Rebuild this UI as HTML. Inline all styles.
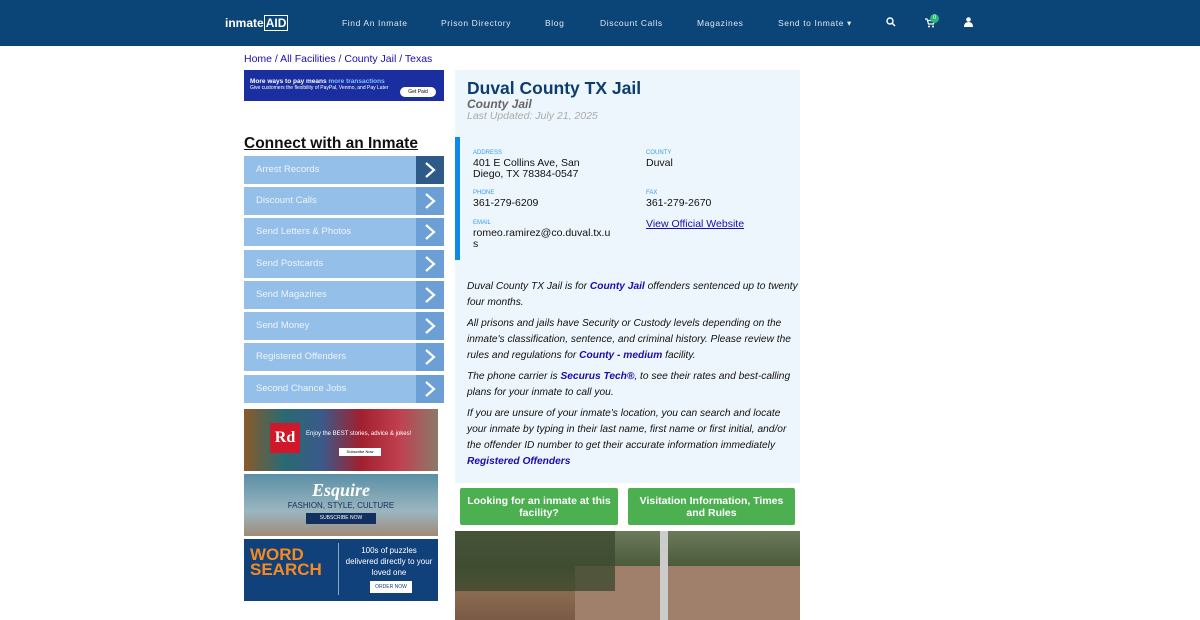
<!DOCTYPE html>
<html><head><meta charset="utf-8"><style>
*{margin:0;padding:0;box-sizing:border-box}
body{width:1200px;height:620px;overflow:hidden;background:#fff;font-family:"Liberation Sans",sans-serif;position:relative}
.nav{position:absolute;left:0;top:0;width:1200px;height:46px;background:#0b4477}
.nav span{position:absolute;top:18px;color:#dfe6ee;font-size:8.5px;letter-spacing:.6px;white-space:nowrap}
.logo{position:absolute;left:225px;top:16px;color:#fff;font-weight:bold;font-size:12px;white-space:nowrap}
.abs{position:absolute}
.crumb{left:244px;top:53px;font-size:10.5px;color:#1a0dab}
.btn{position:absolute;left:244px;width:200px;height:28px;background:#94bfe9;color:#eef5fc;font-size:9.5px;line-height:28px;padding-left:12px}
.btn b{position:absolute;right:0;top:0;width:28px;height:28px;background:#6b9fd6}
.btn b svg{position:absolute;left:7px;top:5px}
.panel{position:absolute;left:455px;top:70px;width:345px;height:413px;background:#edf6fd}
.lab{position:absolute;font-size:6px;color:#3a9cf0}
.val{position:absolute;font-size:10.5px;color:#111;line-height:11px}
.p{position:absolute;left:467px;width:332px;font-size:10.2px;font-style:italic;color:#111;line-height:16px}
.p a{color:#1a0dab;font-weight:bold;text-decoration:none}
.g{position:absolute;top:488px;height:37px;background:#4caf50;color:#fff;font-weight:bold;font-size:10.5px;text-align:center;border-radius:2px;padding:7px 8px 0;line-height:12px}
</style></head><body>
<div class="nav">
<div class="logo">inmate<span style="position:static;font-size:12px;color:#fff;letter-spacing:0;border:1px solid #fff;padding:0 1px;font-weight:bold">AID</span></div>
<span style="left:342px">Find An Inmate</span>
<span style="left:441px">Prison Directory</span>
<span style="left:545px">Blog</span>
<span style="left:600px">Discount Calls</span>
<span style="left:697px">Magazines</span>
<span style="left:778px">Send to Inmate ▾</span>
<svg class="abs" style="left:886px;top:17px" width="10" height="10"><circle cx="4" cy="4" r="3" stroke="#fff" stroke-width="1.4" fill="none"/><path d="M6.3 6.3L9 9" stroke="#fff" stroke-width="1.5"/></svg>
<svg class="abs" style="left:925px;top:18px" width="10" height="10"><path d="M0 1h2l1.5 5h5l1-3.5H3" stroke="#fff" stroke-width="1.2" fill="none"/><circle cx="4" cy="8.5" r="1" fill="#fff"/><circle cx="8" cy="8.5" r="1" fill="#fff"/></svg>
<div class="abs" style="left:930px;top:14px;width:9px;height:9px;border-radius:50%;background:#29b67d;color:#fff;font-size:6px;text-align:center;line-height:9px">0</div>
<svg class="abs" style="left:964px;top:17px" width="9" height="10"><circle cx="4.5" cy="2.5" r="2.3" fill="#fff"/><path d="M0 10 Q0 5 4.5 5 Q9 5 9 10Z" fill="#fff"/></svg>
</div>
<div class="abs crumb">Home / All Facilities / County Jail / Texas</div>
<div class="abs" style="left:244px;top:70px;width:200px;height:31px;background:#1a2ea0;color:#fff;font-size:5px;padding:8px 6px;white-space:nowrap"><b style="font-size:6.5px">More ways to pay means <span style="color:#7fc0ff">more transactions</span></b><br>Give customers the flexibility of PayPal, Venmo, and Pay Later<div class="abs" style="left:156px;top:17px;width:36px;height:10px;background:#fff;border-radius:5px;color:#000;font-size:5px;text-align:center;line-height:10px">Get Paid</div></div>
<div class="abs" style="left:244px;top:135px;font-size:15.5px;font-weight:bold;text-decoration:underline;color:#111">Connect with an Inmate</div>
<div class="btn" style="top:156px">Arrest Records<b style="background:#2e5a8a"><svg width="14" height="18"><path d="M3 2l8 7-8 7" stroke="#fff" stroke-width="2.2" fill="none"/></svg></b></div>
<div class="btn" style="top:187px">Discount Calls<b><svg width="14" height="18"><path d="M3 2l8 7-8 7" stroke="#fff" stroke-width="2.2" fill="none"/></svg></b></div>
<div class="btn" style="top:218px">Send Letters &amp; Photos<b><svg width="14" height="18"><path d="M3 2l8 7-8 7" stroke="#fff" stroke-width="2.2" fill="none"/></svg></b></div>
<div class="btn" style="top:250px">Send Postcards<b><svg width="14" height="18"><path d="M3 2l8 7-8 7" stroke="#fff" stroke-width="2.2" fill="none"/></svg></b></div>
<div class="btn" style="top:281px">Send Magazines<b><svg width="14" height="18"><path d="M3 2l8 7-8 7" stroke="#fff" stroke-width="2.2" fill="none"/></svg></b></div>
<div class="btn" style="top:312px">Send Money<b><svg width="14" height="18"><path d="M3 2l8 7-8 7" stroke="#fff" stroke-width="2.2" fill="none"/></svg></b></div>
<div class="btn" style="top:343px">Registered Offenders<b><svg width="14" height="18"><path d="M3 2l8 7-8 7" stroke="#fff" stroke-width="2.2" fill="none"/></svg></b></div>
<div class="btn" style="top:375px">Second Chance Jobs<b><svg width="14" height="18"><path d="M3 2l8 7-8 7" stroke="#fff" stroke-width="2.2" fill="none"/></svg></b></div>
<div class="abs" style="left:244px;top:409px;width:194px;height:62px;background:linear-gradient(90deg,#8a5a2a,#2a6a70 20%,#3a5a8a 40%,#a02030 60%,#c04050 80%,#8a7a6a)"><div class="abs" style="left:26px;top:14px;width:30px;height:30px;background:#d0182a;color:#fff;font:bold 16px 'Liberation Serif',serif;text-align:center;line-height:30px">Rd</div><div class="abs" style="left:62px;top:22px;color:#fff;font-size:6px;white-space:nowrap">Enjoy the BEST stories, advice &amp; jokes!</div><div class="abs" style="left:95px;top:39px;width:42px;height:8px;background:#fff;font-size:4px;text-align:center;line-height:8px">Subscribe Now</div></div>
<div class="abs" style="left:244px;top:474px;width:194px;height:62px;background:linear-gradient(#5b8fa6,#9ab6bf 60%,#a08a78);color:#fff;text-align:center"><div style="font:bold italic 18px 'Liberation Serif',serif;margin-top:6px">Esquire</div><div style="font-size:8px;color:#16305a">FASHION, STYLE, CULTURE</div><div style="margin:3px auto 0;width:70px;height:11px;background:#123060;font-size:5px;line-height:11px">SUBSCRIBE NOW</div></div>
<div class="abs" style="left:244px;top:539px;width:194px;height:62px;background:#10417a"><div class="abs" style="left:6px;top:8px;color:#f58a20;font:bold 17px/15px 'Liberation Sans',sans-serif">WORD<br>SEARCH</div><div class="abs" style="left:94px;top:4px;width:1px;height:52px;background:#8ab"></div><div class="abs" style="left:100px;top:6px;width:90px;color:#fff;font-size:8px;text-align:center;line-height:11px">100s of puzzles delivered directly to your loved one</div><div class="abs" style="left:126px;top:42px;width:42px;height:12px;background:#fff;color:#10417a;font-size:5px;text-align:center;line-height:12px">ORDER NOW</div></div>
<div class="panel"></div>
<div class="abs" style="left:467px;top:78px;font-size:17.5px;font-weight:bold;color:#0d3d6e">Duval County TX Jail</div>
<div class="abs" style="left:467px;top:97px;font-size:12px;font-weight:bold;font-style:italic;color:#666">County Jail</div>
<div class="abs" style="left:467px;top:110px;font-size:10.5px;font-style:italic;color:#aaa">Last Updated: July 21, 2025</div>
<div class="abs" style="left:455px;top:137px;width:5px;height:123px;background:#0d8ae8"></div>
<div class="lab" style="left:473px;top:150px">ADDRESS</div><div class="val" style="left:473px;top:158px">401 E Collins Ave, San<br>Diego, TX 78384-0547</div>
<div class="lab" style="left:646px;top:150px">COUNTY</div><div class="val" style="left:646px;top:158px">Duval</div>
<div class="lab" style="left:473px;top:190px">PHONE</div><div class="val" style="left:473px;top:198px">361-279-6209</div>
<div class="lab" style="left:646px;top:190px">FAX</div><div class="val" style="left:646px;top:198px">361-279-2670</div>
<div class="lab" style="left:473px;top:220px">EMAIL</div><div class="val" style="left:473px;top:228px">romeo.ramirez@co.duval.tx.u<br>s</div>
<div class="val" style="left:646px;top:219px;color:#1a0dab;text-decoration:underline">View Official Website</div>
<div class="p" style="top:279px">Duval County TX Jail is for <a>County Jail</a> offenders sentenced up to twenty four months.</div>
<div class="p" style="top:316px">All prisons and jails have Security or Custody levels depending on the inmate's classification, sentence, and criminal history. Please review the rules and regulations for <a>County - medium</a> facility.</div>
<div class="p" style="top:369px">The phone carrier is <a>Securus Tech®</a>, to see their rates and best-calling plans for your inmate to call you.</div>
<div class="p" style="top:406px">If you are unsure of your inmate's location, you can search and locate your inmate by typing in their last name, first name or first initial, and/or the offender ID number to get their accurate information immediately <a>Registered Offenders</a></div>
<div class="g" style="left:460px;width:158px;padding:7px 4px 0">Looking for an inmate at this facility?</div>
<div class="g" style="left:628px;width:167px">Visitation Information, Times and Rules</div>
<div class="abs" style="left:455px;top:531px;width:345px;height:89px;background:linear-gradient(180deg,#6a7a5a,#4a5a3a 40%,#8a6a50 70%,#7a5a44)"><div class="abs" style="left:120px;top:35px;width:225px;height:54px;background:#a0806a"></div><div class="abs" style="left:0;top:0;width:160px;height:60px;background:#3d4a30;opacity:.8"></div><div class="abs" style="left:205px;top:0;width:8px;height:89px;background:#ccc"></div></div>
</body></html>
